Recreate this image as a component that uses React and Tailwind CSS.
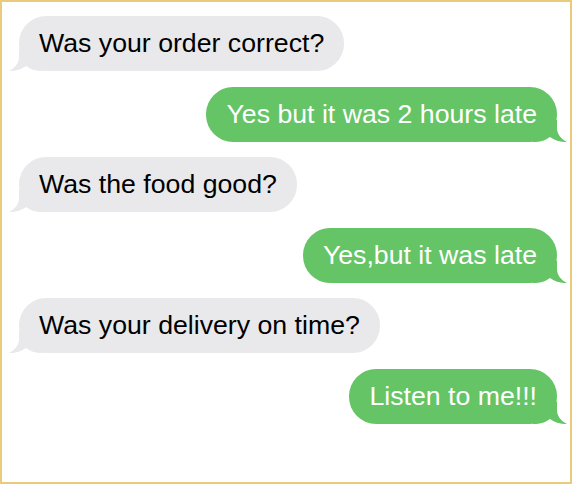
const messages = [
  { from: 'them', text: 'Was your order correct?' },
  { from: 'me', text: 'Yes but it was 2 hours late' },
  { from: 'them', text: 'Was the food good?' },
  { from: 'me', text: 'Yes,but it was late' },
  { from: 'them', text: 'Was your delivery on time?' },
  { from: 'me', text: 'Listen to me!!!' },
]

function Tail({ side, color }) {
  // little hook at the bottom corner, mirrored for sent messages
  return (
    <svg
      viewBox="0 0 34 22"
      className={`absolute bottom-0 w-[34px] h-[22px] ${side === 'left' ? '-left-[10px]' : '-right-[10px] -scale-x-100'}`}
      aria-hidden="true"
    >
      <path
        d="M10 0 L10 8 C10 14 6 19 0 22 C7 22 13 20 17 17 C21 20 26 22 34 22 L34 0 Z"
        fill={color}
      />
    </svg>
  )
}

function Bubble({ from, text }) {
  const mine = from === 'me'
  return (
    <div className={`flex ${mine ? 'justify-end' : 'justify-start'}`}>
      <div
        className={`relative h-[55px] flex items-center px-5 rounded-[27px] text-[26.7px] leading-none ${
          mine ? 'bg-[#65c466] text-white' : 'bg-[#e9e9eb] text-black'
        }`}
      >
        <Tail side={mine ? 'right' : 'left'} color={mine ? '#65c466' : '#e9e9eb'} />
        <span className="relative">{text}</span>
      </div>
    </div>
  )
}

export default function App() {
  return (
    <div
      className="w-[572px] h-[484px] bg-white border-2 border-[#eacb7c] pt-[14px] pl-[17px] pr-[13px] flex flex-col gap-[15.5px]"
      style={{ fontFamily: '"Liberation Sans", Arial, sans-serif' }}
    >
      {messages.map((m, i) => (
        <Bubble key={i} {...m} />
      ))}
    </div>
  )
}
